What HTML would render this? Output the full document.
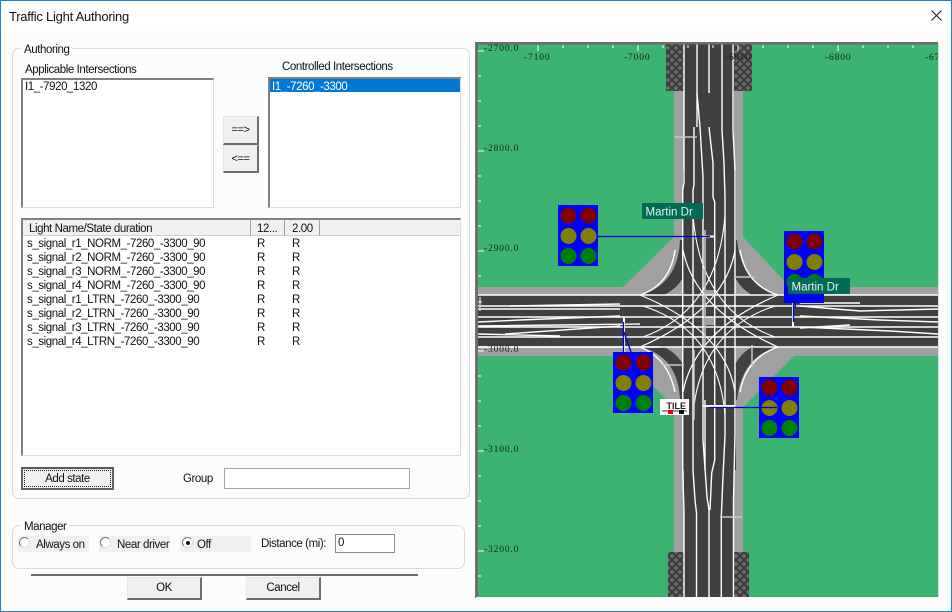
<!DOCTYPE html>
<html><head><meta charset="utf-8"><style>
html,body{margin:0;padding:0;width:952px;height:612px;overflow:hidden;background:#fcfcfc}
body{position:relative;font:11.5px "Liberation Sans",sans-serif;letter-spacing:-.42px;color:#111}
.a{position:absolute;box-sizing:border-box;white-space:nowrap}
.t{position:absolute;white-space:nowrap;line-height:14px}
.btn{position:absolute;box-sizing:border-box;background:#f0f0f0;border:1px solid #e4e4e4;border-right:2px solid #6d6d6d;border-bottom:2px solid #6d6d6d;text-align:center;white-space:nowrap}
.list{position:absolute;box-sizing:border-box;background:#fff;border:1px solid #dcdcdc;border-top:2px solid #808080;border-left:2px solid #808080}
.grp{position:absolute;box-sizing:border-box;border:1px solid #dadada;border-radius:7px}
.lg{position:absolute;background:#fcfcfc;padding:0 3px;line-height:14px}
.rb{position:absolute;width:11px;height:11px;box-sizing:border-box;border-radius:50%;background:#fff;border:1px solid #777;border-right-color:#ddd;border-bottom-color:#ddd}
.rw{position:absolute;background:#f0f0f0;height:16px;width:71px}
.hd{position:absolute;top:220px;height:16px;box-sizing:border-box;background:#f0f0f0;border-right:1px solid #a0a0a0;border-bottom:1px solid #d0d0d0;line-height:18px}
</style></head><body>
<div class="a" style="left:0;top:0;width:952px;height:31px;background:#fff"></div>
<div class="t" style="left:9px;top:9px;font-size:13px;letter-spacing:-.25px;line-height:15px">Traffic Light Authoring</div>
<svg class="a" style="left:930px;top:9px" width="14" height="14"><path d="M1.500 1.500L11.500 11.500M11.500 1.500L1.500 11.500" stroke="#222" stroke-width="1.100" fill="none"/></svg>

<div class="grp" style="left:12px;top:48px;width:458px;height:451px"></div>
<div class="lg" style="left:21px;top:43px">Authoring</div>
<div class="t" style="left:25px;top:63px">Applicable Intersections</div>
<div class="t" style="left:282px;top:60px">Controlled Intersections</div>
<div class="list" style="left:21px;top:78px;width:193px;height:130px"></div>
<div class="t" style="left:25px;top:80px">I1_-7920_1320</div>
<div class="list" style="left:268px;top:77px;width:193px;height:131px"></div>
<div class="a" style="left:270px;top:79px;width:190px;height:13px;background:#0078d7"></div>
<div class="t" style="left:272px;top:80px;color:#fff">I1_-7260_-3300</div>
<div class="btn" style="left:223px;top:116px;width:36px;height:29px;line-height:27px;font-size:11px">==&gt;</div>
<div class="btn" style="left:223px;top:145px;width:36px;height:28px;line-height:26px;font-size:11px">&lt;==</div>

<div class="list" style="left:21px;top:218px;width:440px;height:238px"></div>
<div class="hd" style="left:23px;width:228px;padding-left:6px">Light Name/State duration</div>
<div class="hd" style="left:251px;width:34px;padding-left:6px">12...</div>
<div class="hd" style="left:285px;width:35px;padding-left:7px">2.00</div>
<div class="hd" style="left:320px;width:140px;border-right:0"></div>
<div class="t" style="left:27px;top:237px">s_signal_r1_NORM_-7260_-3300_90</div><div class="t" style="left:257px;top:237px">R</div><div class="t" style="left:292px;top:237px">R</div>
<div class="t" style="left:27px;top:251px">s_signal_r2_NORM_-7260_-3300_90</div><div class="t" style="left:257px;top:251px">R</div><div class="t" style="left:292px;top:251px">R</div>
<div class="t" style="left:27px;top:265px">s_signal_r3_NORM_-7260_-3300_90</div><div class="t" style="left:257px;top:265px">R</div><div class="t" style="left:292px;top:265px">R</div>
<div class="t" style="left:27px;top:279px">s_signal_r4_NORM_-7260_-3300_90</div><div class="t" style="left:257px;top:279px">R</div><div class="t" style="left:292px;top:279px">R</div>
<div class="t" style="left:27px;top:293px">s_signal_r1_LTRN_-7260_-3300_90</div><div class="t" style="left:257px;top:293px">R</div><div class="t" style="left:292px;top:293px">R</div>
<div class="t" style="left:27px;top:307px">s_signal_r2_LTRN_-7260_-3300_90</div><div class="t" style="left:257px;top:307px">R</div><div class="t" style="left:292px;top:307px">R</div>
<div class="t" style="left:27px;top:321px">s_signal_r3_LTRN_-7260_-3300_90</div><div class="t" style="left:257px;top:321px">R</div><div class="t" style="left:292px;top:321px">R</div>
<div class="t" style="left:27px;top:335px">s_signal_r4_LTRN_-7260_-3300_90</div><div class="t" style="left:257px;top:335px">R</div><div class="t" style="left:292px;top:335px">R</div>

<div class="a" style="left:21px;top:467px;width:93px;height:23px;background:#f0f0f0;border:2px solid #646464;border-top-color:#555;line-height:21px;text-align:center;outline:1px dotted #222;outline-offset:-4px">Add state</div>
<div class="t" style="left:183px;top:472px">Group</div>
<div class="a" style="left:224px;top:468px;width:186px;height:21px;background:#fff;border:1px solid #a6a6a6"></div>

<div class="grp" style="left:12px;top:525px;width:453px;height:44px"></div>
<div class="lg" style="left:21px;top:520px">Manager</div>
<div class="rw" style="left:18px;top:536px"></div><div class="rw" style="left:99px;top:536px"></div><div class="rw" style="left:180px;top:536px"></div>
<div class="rb" style="left:19px;top:537px"></div><div class="t" style="left:36px;top:538px">Always on</div>
<div class="rb" style="left:100px;top:537px"></div><div class="t" style="left:117px;top:538px">Near driver</div>
<div class="rb" style="left:182px;top:537px"></div><div class="a" style="left:186px;top:541px;width:4px;height:4px;border-radius:50%;background:#111"></div><div class="t" style="left:197px;top:538px">Off</div>
<div class="t" style="left:261px;top:537px">Distance (mi):</div>
<div class="a" style="left:335px;top:534px;width:60px;height:19px;background:#fff;border:1px solid #8a8a8a;line-height:16px;padding-left:2px">0</div>
<div class="a" style="left:31px;top:574px;width:387px;height:2px;background:#6d6d6d"></div>
<div class="btn" style="left:127px;top:577px;width:75px;height:23px;line-height:21px">OK</div>
<div class="btn" style="left:246px;top:577px;width:75px;height:23px;line-height:21px">Cancel</div>

<svg class="a" style="left:0;top:0;letter-spacing:0" width="952" height="612" viewBox="0 0 952 612">
<defs>
<pattern id="h" width="8" height="8" patternUnits="userSpaceOnUse"><rect width="8" height="8" fill="#6a6a6a"/><path d="M0 0L8 8M8 0L0 8" stroke="#3a3a3a" stroke-width="2"/></pattern>
<g id="sig"><rect width="40" height="61" fill="#00f"/><circle cx="10.500" cy="10.500" r="8" fill="#800000"/><circle cx="30.500" cy="10.500" r="8" fill="#800000"/><circle cx="10.500" cy="31" r="8" fill="#808000"/><circle cx="30.500" cy="31" r="8" fill="#808000"/><circle cx="10.500" cy="51" r="8" fill="#008000"/><circle cx="30.500" cy="51" r="8" fill="#008000"/></g>
<clipPath id="c"><rect x="476" y="42" width="462" height="555"/></clipPath>
</defs>
<path d="M475.500 42V598" stroke="#777" stroke-width="1"/>
<g clip-path="url(#c)">
<rect x="476" y="42" width="462" height="555" fill="#3cb371"/>
<path d="M674 44H743V237L790 287H938V356H794L743 407V597H674V407L623 356H478V287H623L674 237Z" fill="#a0a0a0"/>
<rect x="666" y="44" width="86" height="47" fill="url(#h)"/>
<rect x="668" y="552" width="81" height="45" fill="url(#h)"/>
<rect x="684" y="44" width="50" height="553" fill="#404040"/>
<rect x="683" y="170" width="53" height="300" fill="#404040"/>
<rect x="478" y="295" width="460" height="52" fill="#404040"/>
<path d="M680 240Q678 285 640 295H778Q742 285 737 240Z" fill="#404040"/>
<path d="M680 400Q678 356 640 347H778Q742 356 737 400Z" fill="#404040"/>
<path d="M683 277V295H664Q678 288 683 277ZM735 277V295H752Q740 288 735 277ZM683 365V347H664Q678 354 683 365ZM735 365V347H752Q740 354 735 365ZM706 290H714V295H706ZM706 317H714V325H706Z" fill="#a0a0a0"/>
<g fill="none" stroke="#fff" stroke-width="1.400">
<path d="M684 44V183L682.700 190V470L684 512V597"/>
<path d="M697 44V127M694 127V185L693 190V470L695 500 696.500 513V597"/>
<path d="M709 44V93M697 93L700 127 703 177 703 440 707 497 709 510V597"/>
<path d="M709 127L713 163V197L714.700 202V460L711.700 473 710 510"/>
<path d="M722 44V130L724 163 725 197V435L722.700 483 721.300 517V597"/>
<path d="M733 44V130L735 170V433L733.500 500V597"/>
<path d="M705 400V470"/>
<path d="M478 295H938M478 306H938M478 317H938M478 327H938M478 337H938M478 347H938" stroke-width="1.500"/>
<path d="M478 309H620M478 322L520 320 620 316M510 306L620 304M478 326L640 324M505 334L620 326M478 334L560 336M478 347H660" stroke-width="1.400"/>
<path d="M938 309L860 311 800 306M938 322L880 320 800 316M938 334L890 331 800 327M860 303L800 303M850 325L800 328" stroke-width="1.400"/>
<path d="M675 250Q670 285 640 295M740 250Q746 285 778 295M675 392Q668 358 640 347M740 392Q746 358 778 347"/>
<path d="M683 250Q695 310 778 347M735 250Q725 310 640 347M683 392Q695 330 778 295M735 392Q725 330 640 295" stroke-width="1.200"/>
<path d="M693 215Q700 310 775 337M725 215Q718 310 643 337M693 415Q700 330 775 306M725 415Q718 330 643 306" stroke-width="1.100"/>
</g>
<g fill="none" stroke="#c8c8c8" stroke-width="1.500">
<path d="M674 137H697M735 277H755M662 365H684M752 345V367M705 230V345M694 350V420"/>
<path d="M720 517H742M480 297V311"/>
</g>
<path d="M478 302H482" stroke="#fff"/>
<path d="M703 406H735" stroke="#fff" stroke-width="2"/>
<path d="M793 295V327M624 317V352" stroke="#fff" stroke-width="2"/>
<path d="M703 236.500H715" stroke="#fff" stroke-width="2"/>
<path d="M476 42H938V44.500H476ZM476 42H478V597H476Z" fill="#6d6d6d"/>
<path d="M538 45v6M638 45v6M738 45v6M838 45v6M563 45v3M588 45v3M613 45v3M663 45v3M688 45v3M713 45v3M763 45v3M788 45v3M813 45v3M863 45v3M888 45v3M913 45v3" stroke="#fff" fill="none"/>
<path d="M478 51h6M478 151h6M478 251h6M478 351h6M478 451h6M478 551h6M478 76h3M478 101h3M478 126h3M478 176h3M478 201h3M478 226h3M478 276h3M478 326h3M478 376h3M478 401h3M478 426h3M478 476h3M478 501h3M478 526h3M478 576h3" stroke="#fff" fill="none"/>
<use href="#sig" x="558" y="205"/>
<use href="#sig" x="784" y="231"/><rect x="784" y="290" width="40" height="13" fill="#00f"/><circle cx="794.500" cy="282" r="8" fill="#008000"/><circle cx="814.500" cy="282" r="8" fill="#008000"/>
<use href="#sig" x="613" y="352"/>
<use href="#sig" x="759" y="377"/>
<path d="M598 236.500H710M793.500 294V322M797 294L795 308M623.500 322V352M624 332L631 352M709 407.500H777" stroke="#0000d8" stroke-width="1.300" fill="none"/>
<rect x="642" y="203" width="61" height="16" fill="#006a55"/>
<rect x="788" y="278" width="62" height="16" fill="#006a55"/>
<rect x="660" y="399" width="29" height="16" fill="#fff"/>
<path d="M662 411H687" stroke="#333"/><rect x="668" y="410" width="5" height="4" fill="#e00"/><rect x="679" y="410" width="5" height="4" fill="#111"/>
<text x="666.500" y="409" font-family="Liberation Sans" font-size="9" font-weight="bold" fill="#222">TILE</text>
<text x="645.500" y="215.500" font-family="Liberation Sans" font-size="11.500" fill="#e8f4f0">Martin Dr</text>
<text x="791.500" y="290.500" font-family="Liberation Sans" font-size="11.500" fill="#e8f4f0">Martin Dr</text>
<g font-family="Liberation Serif" font-size="9.500" fill="#10261c" letter-spacing=".85">
<text x="524" y="60">-7100</text><text x="624" y="60">-7000</text><text x="725" y="60">-6900</text><text x="825" y="60">-6800</text><text x="925" y="60">-6700</text>
<text x="484" y="51">-2700.0</text><text x="484" y="151">-2800.0</text><text x="484" y="251">-2900.0</text><text x="484" y="352">-3000.0</text><text x="484" y="452">-3100.0</text><text x="484" y="552">-3200.0</text>
</g>
</g>
<path d="M938.500 44V597" stroke="#dcdcdc"/>
<path d="M.5 0V612M951.500 0V612M0 .5H952M0 611.500H952" stroke="#1a7fd0" fill="none"/>
</svg>
</body></html>
